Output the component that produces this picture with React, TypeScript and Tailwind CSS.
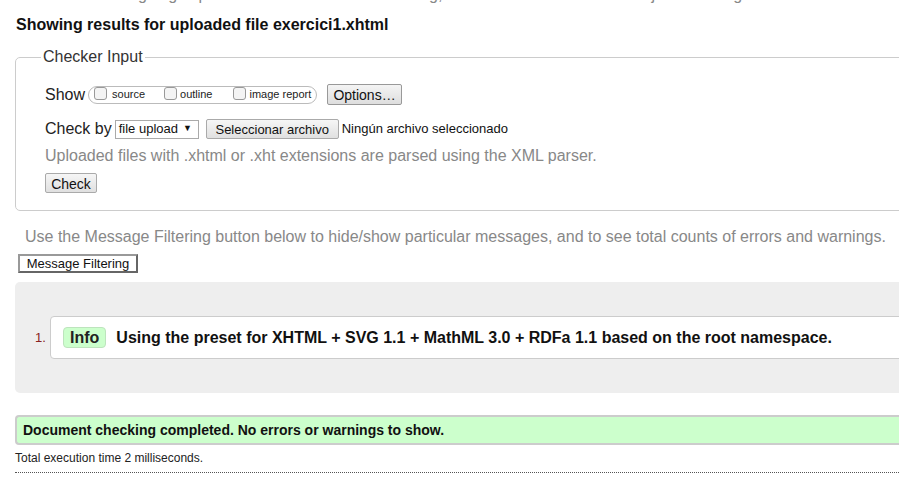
export default function App() {
  return (
    <div className="w-[899px] h-[479px] overflow-hidden bg-white font-['Liberation_Sans',Arial,sans-serif] text-[#222]">
      <div className="-mt-[14px] ml-[15px] w-[920px]">
        <p className="pl-[2px] text-[16px] leading-[18px] text-[#888]">
          This tool is an ongoing experiment in better HTML checking, and its behavior remains subject to change
        </p>

        <h2 className="mt-[12px] pl-[1px] text-[16px] leading-[18px] font-bold text-[#111]">
          Showing results for uploaded file exercici1.xhtml
        </h2>

        <fieldset className="mt-[14px] border border-[#ccc] rounded-[5px] pl-[29px] pb-[17px]">
          <legend className="-ml-[4px] px-[2px] text-[16px] leading-[18px] text-[#333]">Checker Input</legend>

          <div className="mt-[18px] flex items-center h-[21px]">
            <span className="text-[16px] leading-[18px]">Show</span>
            <span className="ml-[3px] flex items-center h-[18px] w-[229px] border border-[#bbb] rounded-full pl-[5px] text-[11px]">
              <span className="w-[13px] h-[13px] border border-[#999] rounded-[3px] bg-[#f4f4f4] -mt-[3px]" />
              <span className="ml-[5px]">source</span>
              <span className="ml-[19px] w-[13px] h-[13px] border border-[#999] rounded-[3px] bg-[#f4f4f4] -mt-[3px]" />
              <span className="ml-[3px]">outline</span>
              <span className="ml-[21px] w-[13px] h-[13px] border border-[#999] rounded-[3px] bg-[#f4f4f4] -mt-[3px]" />
              <span className="ml-[3px]">image report</span>
            </span>
            <button className="ml-[10px] h-[21px] w-[75px] border border-[#999] rounded-[2px] bg-gradient-to-b from-[#f4f4f4] to-[#dedede] text-[14px] text-[#111]">
              Options…
            </button>
          </div>

          <div className="mt-[14px] flex items-center h-[20px]">
            <span className="text-[16px] leading-[18px]">Check by</span>
            <span className="ml-[3px] flex items-center h-[19px] w-[84px] border border-[#aaa] bg-white pl-[3px] text-[13px] text-[#111]">
              file upload
              <span className="ml-[5px] text-[9px]">▼</span>
            </span>
            <button className="ml-[7px] h-[20px] w-[133px] border border-[#aaa] rounded-[2px] bg-gradient-to-b from-[#f6f6f6] to-[#e0e0e0] text-[13px] text-[#111]">
              Seleccionar archivo
            </button>
            <span className="ml-[3px] text-[13px] text-[#111]">Ningún archivo seleccionado</span>
          </div>

          <p className="mt-[8px] text-[16px] leading-[18px] text-[#888]">
            Uploaded files with .xhtml or .xht extensions are parsed using the XML parser.
          </p>

          <button className="mt-[8px] h-[20px] w-[52px] border border-[#aaa] rounded-[2px] bg-gradient-to-b from-[#f6f6f6] to-[#e0e0e0] text-[14px] text-[#111] block">
            Check
          </button>
        </fieldset>

        <p className="mt-[17px] pl-[10px] text-[16px] leading-[18px] text-[#888]">
          Use the Message Filtering button below to hide/show particular messages, and to see total counts of errors and warnings.
        </p>

        <button className="mt-[8px] ml-[3px] h-[19px] w-[120px] border-2 border-[#666] border-t-[#999] border-l-[#999] bg-white text-[13px] leading-[15px] text-[#111] block">
          Message Filtering
        </button>

        <div className="mt-[9px] h-[111px] bg-[#eee] rounded-l-[5px] flex items-center">
          <span className="ml-[20px] w-[15px] text-[13px] text-[#822]">1.</span>
          <div className="h-[43px] flex-1 bg-white border border-[#ccc] rounded-l-[4px] flex items-center pl-[12px]">
            <span className="h-[21px] px-[6px] bg-[#ccffcc] border border-[#bde4bd] rounded-[4px] text-[16px] leading-[19px] font-bold text-[#222]">
              Info
            </span>
            <span className="ml-[10px] text-[16px] font-bold text-[#111]">
              Using the preset for XHTML + SVG 1.1 + MathML 3.0 + RDFa 1.1 based on the root namespace.
            </span>
          </div>
        </div>

        <div className="mt-[22px] h-[30px] bg-[#ccffcc] border-y-2 border-l-2 border-[#ccc] rounded-l-[4px] flex items-center pl-[6px]">
          <span className="text-[14px] font-bold text-[#111]">
            Document checking completed. No errors or warnings to show.
          </span>
        </div>

        <p className="mt-[6px] text-[12px] leading-[14px] text-[#222]">Total execution time 2 milliseconds.</p>

        <div className="mt-[7px] border-b border-dotted border-[#555]" />
      </div>
    </div>
  );
}
